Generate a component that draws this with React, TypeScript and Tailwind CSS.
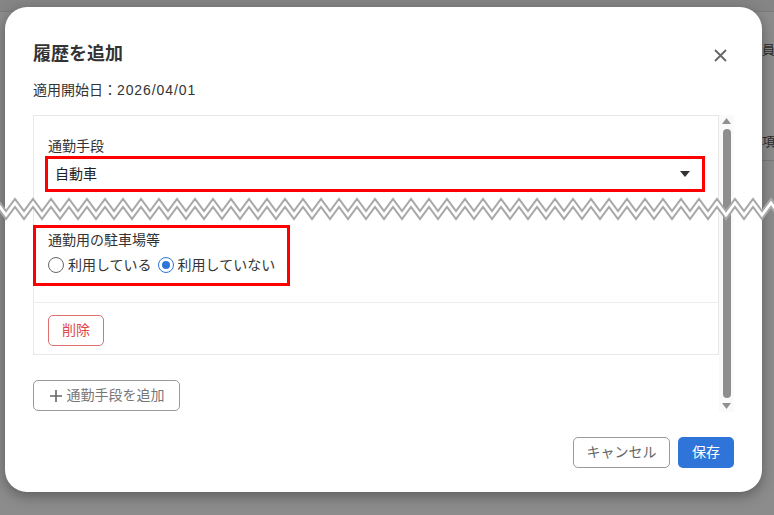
import { useState } from 'react';

const JP = { fontFamily: '"Liberation Sans", "Noto Sans CJK JP", "Noto Sans", sans-serif' };

// zigzag points for the "torn" band across the screenshot
const buildTear = () => {
  const top: string[] = [];
  const bottom: string[] = [];
  for (let x = -12; x <= 790; x += 9) {
    const up = Math.round((x + 12) / 9) % 2 === 1;
    top.push(`${x},${up ? 3 : 15}`);
    bottom.push(`${x},${up ? 11 : 23}`);
  }
  return { top: top.join(' '), bottom: bottom.join(' '), fill: [...top, ...bottom.slice().reverse()].join(' ') };
};

const tear = buildTear();

const Radio = ({ checked, label, onClick }: { checked: boolean; label: string; onClick: () => void }) => (
  <button type="button" onClick={onClick} className="flex items-center gap-[4px] text-[14px] leading-[20px] text-[#333]">
    <span
      className={`flex h-[16px] w-[16px] items-center justify-center rounded-full border-[1.5px] ${
        checked ? 'border-[#2f74d8]' : 'border-[#666]'
      }`}>
      {checked && <span className="h-[8px] w-[8px] rounded-full bg-[#2f74d8]" />}
    </span>
    {label}
  </button>
);

const App = () => {
  const [parking, setParking] = useState<'yes' | 'no'>('no');

  return (
    <div className="relative h-[515px] w-full overflow-hidden bg-[#8c8c8c]" style={JP}>
      {/* page behind the overlay */}
      <div className="h-[12px] border-b border-[#7b7b7b] bg-[#858585]" />
      <div className="flex justify-end">
        <div className="w-[12px] overflow-hidden pt-[28px] text-[13px] leading-[20px] text-[#2a2a2a]">
          <div className="whitespace-nowrap">員1</div>
          <div className="mt-[72px] whitespace-nowrap">項</div>
          <div className="mt-[8px] border-t border-[#7a7a7a]" />
        </div>
      </div>

      {/* modal layer */}
      <div className="absolute inset-0 pl-[5px] pt-[7px]">
        <div className="flex h-[485px] w-[757px] flex-col rounded-[22px] bg-white px-[28px] pb-[24px] pt-[35px] shadow-[0_4px_14px_rgba(0,0,0,0.35)]">
          <div className="flex h-[24px] items-center justify-between">
            <h2 className="text-[18px] font-bold leading-[24px] text-[#333]">履歴を追加</h2>
            <button type="button" className="mt-[3px] flex h-[24px] w-[28px] items-center justify-center">
              <svg width="13" height="13" viewBox="0 0 13 13" fill="none" stroke="#666" strokeWidth="1.8">
                <path d="M1 1l11 11M12 1L1 12" />
              </svg>
            </button>
          </div>
          <p className="mt-[14px] text-[14px] leading-[20px] text-[#333]">
            適用開始日：<span className="tracking-[0.9px]">2026/04/01</span>
          </p>

          <div className="mt-[15px] flex h-[297px]">
            <div className="flex w-[686px] flex-col">
              <div className="border border-[#e8e8e8]">
                <div className="px-[14px] pb-[16px] pt-[21px]">
                  <label className="block text-[14px] leading-[18px] text-[#333]">通勤手段</label>
                  <div className="-ml-[3px] mt-[1px] flex h-[36px] w-[660px] items-center justify-between border-[3px] border-[#ff0000] pl-[7px] pr-[12px]">
                    <span className="text-[14px] text-[#222]">自動車</span>
                    <svg width="10" height="6" viewBox="0 0 10 6">
                      <path d="M0 0h10L5 6z" fill="#333" />
                    </svg>
                  </div>
                  <div className="-ml-[15px] mt-[33px] h-[61px] w-[257px] border-[3px] border-[#ff0000] pl-[12px] pt-[3px]">
                    <div className="text-[14px] leading-[18px] text-[#333]">通勤用の駐車場等</div>
                    <div className="mt-[6px] flex items-center gap-[6px]">
                      <Radio checked={parking === 'yes'} label="利用している" onClick={() => setParking('yes')} />
                      <Radio checked={parking === 'no'} label="利用していない" onClick={() => setParking('no')} />
                    </div>
                  </div>
                </div>
                <div className="border-t border-[#ececec] px-[14px] pb-[8px] pt-[12px]">
                  <button
                    type="button"
                    className="h-[31px] w-[56px] rounded-[5px] border border-[#e07070] text-[14px] text-[#e04848]">
                    削除
                  </button>
                </div>
              </div>
              <button
                type="button"
                className="mt-[25px] flex h-[31px] w-[147px] items-center justify-center gap-[4px] rounded-[5px] border border-[#9a9a9a] text-[14px] text-[#777]">
                <svg width="14" height="14" viewBox="0 0 14 14" stroke="#666" strokeWidth="1.6">
                  <path d="M7 1v12M1 7h12" />
                </svg>
                通勤手段を追加
              </button>
            </div>
            {/* scrollbar */}
            <div className="flex w-[15px] flex-col items-center bg-[#fafafa] py-[3px]">
              <svg width="9" height="6" viewBox="0 0 9 6">
                <path d="M0 6h9L4.5 0z" fill="#909090" />
              </svg>
              <div className="mt-[5px] w-[8px] flex-1 rounded-full bg-[#8e8e8e]" />
              <svg className="mt-[5px]" width="9" height="6" viewBox="0 0 9 6">
                <path d="M0 0h9L4.5 6z" fill="#909090" />
              </svg>
            </div>
          </div>

          <div className="mt-[25px] flex justify-end gap-[8px]">
            <button
              type="button"
              className="h-[31px] w-[97px] rounded-[5px] border border-[#9a9a9a] text-[14px] text-[#666]">
              キャンセル
            </button>
            <button type="button" className="h-[31px] w-[56px] rounded-[5px] bg-[#2f74d8] text-[14px] text-white">
              保存
            </button>
          </div>
        </div>
      </div>

      {/* torn-paper band drawn over the screenshot */}
      <svg className="absolute left-0 top-[196px]" width="774" height="26" viewBox="0 0 774 26">
        <polygon points={tear.fill} fill="#fff" />
        <polyline points={tear.top} fill="none" stroke="#a8a8a8" strokeWidth="2" />
        <polyline points={tear.bottom} fill="none" stroke="#a8a8a8" strokeWidth="2" />
      </svg>
    </div>
  );
};

export default App;
